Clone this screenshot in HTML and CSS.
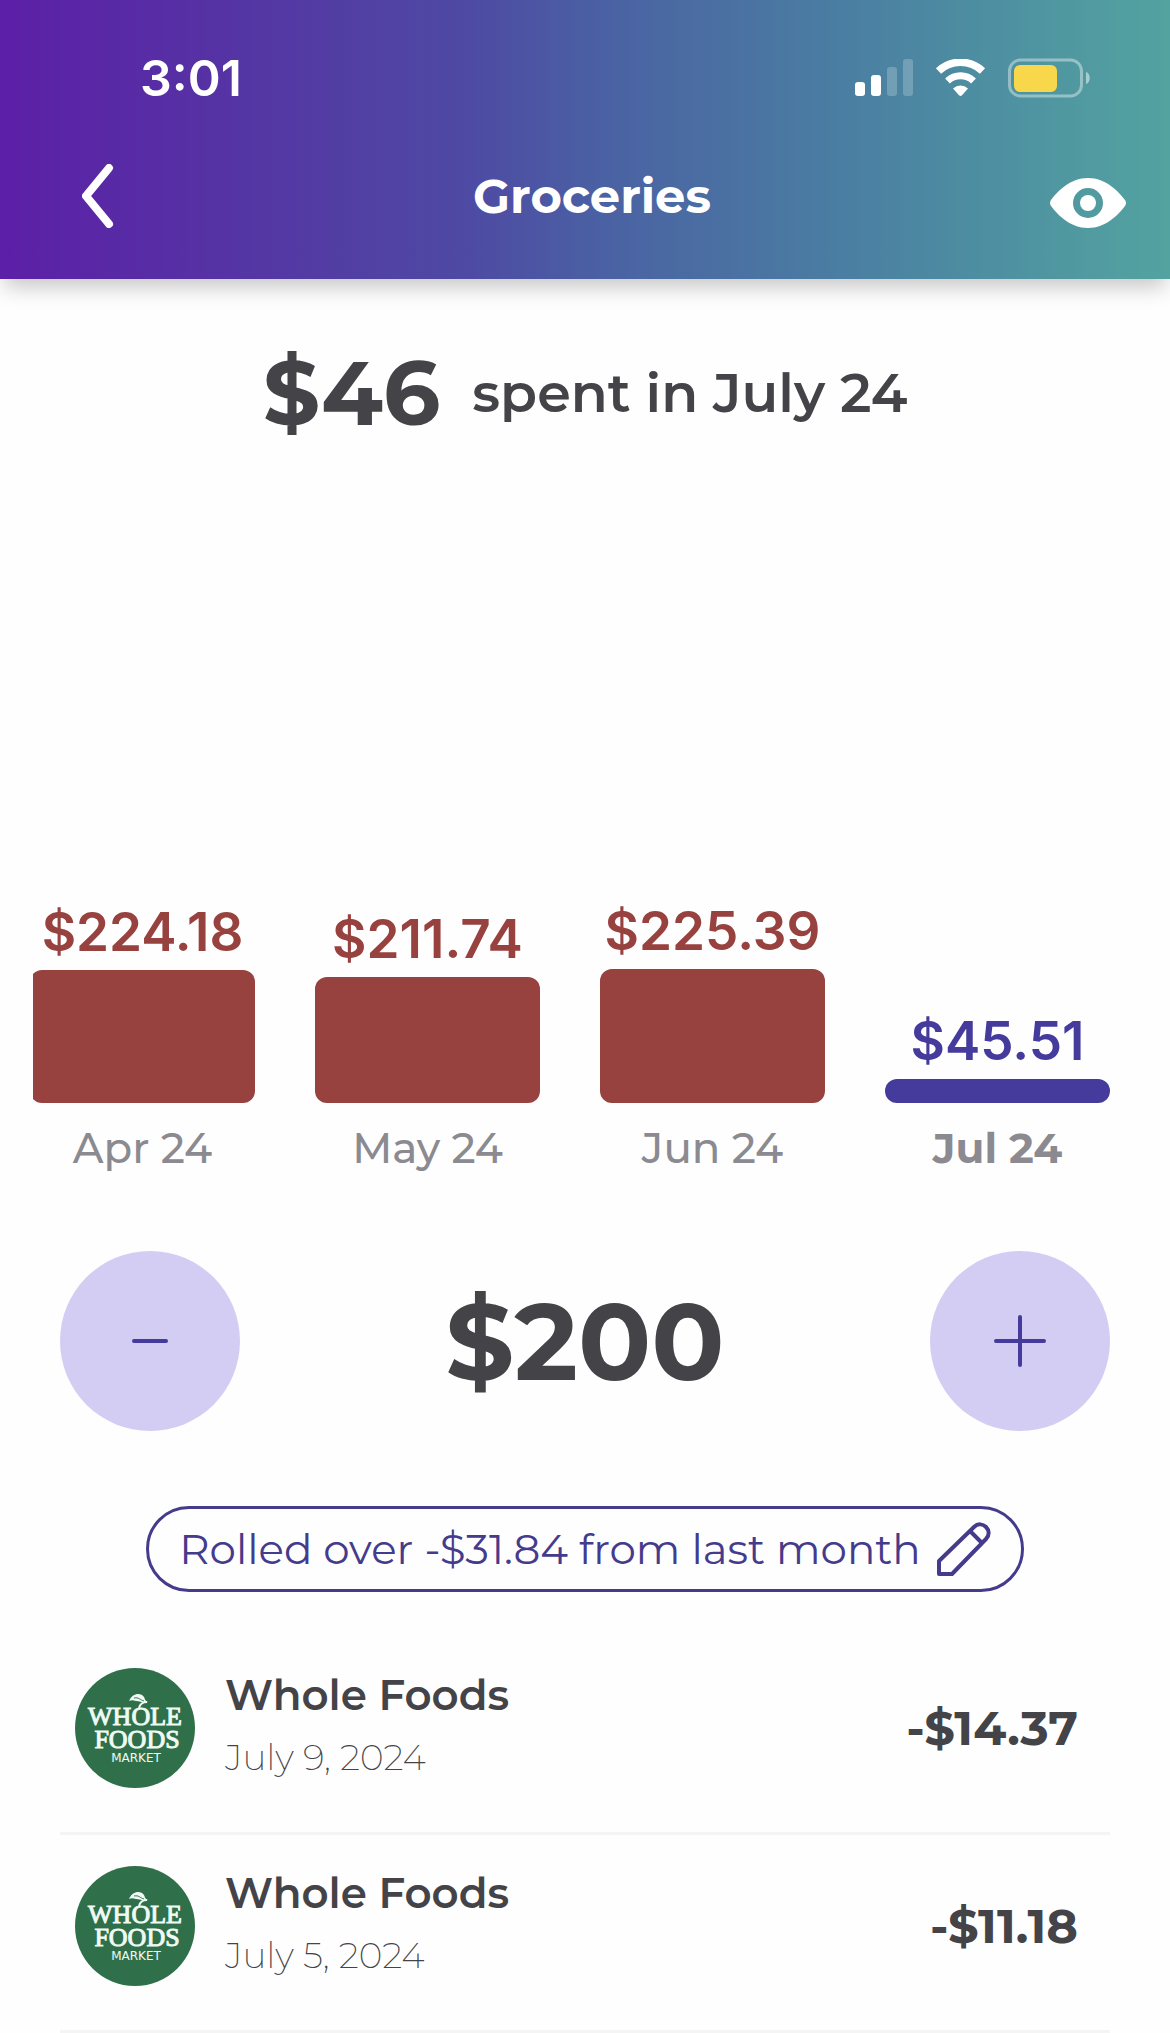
FILE: index.html
```html
<!DOCTYPE html>
<html lang="en">
<head>
<meta charset="utf-8">
<meta name="viewport" content="width=device-width, initial-scale=1">
<title>Groceries</title>
<link rel="stylesheet" href="styles.css">
</head>
<body>
<header class="header">
  <div class="status">
    <span class="clock">3:01</span>
    <div class="indicators">
      <svg width="58" height="38" viewBox="0 0 58 38" fill="#fff" role="img" aria-label="Signal">
        <rect x="0" y="23" width="10" height="14" rx="3"/>
        <rect x="16" y="16" width="10" height="21" rx="3"/>
        <rect x="32" y="8" width="10" height="29" rx="3" opacity=".22"/>
        <rect x="48" y="0" width="10" height="37" rx="3" opacity=".22"/>
      </svg>
      <svg width="51" height="38" viewBox="0 0 51 38" role="img" aria-label="Wi-Fi">
        <path d="M3.500 12a32 32 0 0 1 44 0" fill="none" stroke="#fff" stroke-width="7.500"/>
        <path d="M12.500 22a19 19 0 0 1 26 0" fill="none" stroke="#fff" stroke-width="7"/>
        <path d="M18 29.500a11 11 0 0 1 15 0L27 36.200q-1.500 1.500-3 0z" fill="#fff"/>
      </svg>
      <svg width="83" height="40" viewBox="0 0 83 40" role="img" aria-label="Battery">
        <rect x="1.500" y="2" width="72" height="36" rx="11" fill="none" stroke="#fff" stroke-width="3" opacity=".4"/>
        <rect x="6" y="7" width="43" height="27" rx="6" fill="#f8d84a"/>
        <path d="M78 14c5 1 5 11 0 12z" fill="#fff" opacity=".5"/>
      </svg>
    </div>
  </div>
  <div class="titlebar">
    <button class="icon-button back" type="button" aria-label="Back">
      <svg width="32" height="64" viewBox="0 0 32 64" fill="none" stroke="#fff" stroke-width="8" stroke-linecap="round" stroke-linejoin="round"><path d="M27 4 4 32l23 28"/></svg>
    </button>
    <h1 class="title">Groceries</h1>
    <button class="icon-button view" type="button" aria-label="Toggle visibility">
      <svg width="76" height="64" viewBox="0 0 76 64"><path fill="#fff" fill-rule="evenodd" d="M38 14C56 14 69 28 75 36q2 3 0 6C69 50 56 64 38 64S7 50 1 42q-2-3 0-6C7 28 20 14 38 14zM38 24a15 15 0 1 0 0 30 15 15 0 0 0 0-30z"/><circle cx="38" cy="39" r="8" fill="#fff"/></svg>
    </button>
  </div>
</header>

<main>
  <p class="summary"><strong class="spent">$46</strong> <span class="period">spent in July 24</span></p>

  <section class="chart" aria-label="Spending by month">
    <div class="columns">
      <div class="column over"><span class="value">$224.18</span><div class="bar" style="height:133px"></div><span class="month">Apr 24</span></div>
      <div class="column over"><span class="value">$211.74</span><div class="bar" style="height:126px"></div><span class="month">May 24</span></div>
      <div class="column over"><span class="value">$225.39</span><div class="bar" style="height:134px"></div><span class="month">Jun 24</span></div>
      <div class="column current"><span class="value">$45.51</span><div class="bar" style="height:24px"></div><span class="month">Jul 24</span></div>
    </div>
  </section>

  <section class="stepper" aria-label="Monthly budget">
    <button class="step" type="button" aria-label="Decrease budget">
      <svg width="52" height="52" viewBox="0 0 52 52" stroke="#453b9c" stroke-width="4" stroke-linecap="round"><path d="M10 26h32"/></svg>
    </button>
    <output class="budget">$200</output>
    <button class="step" type="button" aria-label="Increase budget">
      <svg width="52" height="52" viewBox="0 0 52 52" stroke="#453b9c" stroke-width="4" stroke-linecap="round"><path d="M2 26h48M26 2v48"/></svg>
    </button>
  </section>

  <button class="rollover" type="button">
    <span>Rolled over -$31.84 from last month</span>
    <svg width="54" height="54" viewBox="0 0 54 54" fill="none" stroke="#453b8c" stroke-width="4" stroke-linejoin="round"><path d="M2 52V39L37 5c8-8 20 4 12 12L15 52zM33 9l12 12"/></svg>
  </button>

  <ul class="transactions">
    <li class="transaction">
      <svg class="logo" viewBox="0 0 120 120" role="img" aria-label="Whole Foods Market">
        <circle cx="60" cy="60" r="60" fill="#2f704a"/>
        <text class="logo-name" x="60" y="57">WHOLE</text>
        <text class="logo-name" x="62" y="80">FOODS</text>
        <text class="logo-sub" x="61" y="94">MARKET</text>
        <path d="M54 33C57 25 66 24 69 29c1 2 1 4 4 5-4 2-8-1-12-1-3-1-5-1-7 0z" fill="#effaf4"/>
        <path d="M59 30c5-1 6 2 10 3" fill="none" stroke="#2f704a" stroke-width="1"/>
        <path d="M72 34c-4 0-7 2-8 6" fill="none" stroke="#effaf4" stroke-width="2"/>
      </svg>
      <div class="details"><span class="merchant">Whole Foods</span><time class="date" datetime="2024-07-09">July 9, 2024</time></div>
      <span class="amount">-$14.37</span>
    </li>
    <li class="transaction">
      <svg class="logo" viewBox="0 0 120 120" role="img" aria-label="Whole Foods Market">
        <circle cx="60" cy="60" r="60" fill="#2f704a"/>
        <text class="logo-name" x="60" y="57">WHOLE</text>
        <text class="logo-name" x="62" y="80">FOODS</text>
        <text class="logo-sub" x="61" y="94">MARKET</text>
        <path d="M54 33C57 25 66 24 69 29c1 2 1 4 4 5-4 2-8-1-12-1-3-1-5-1-7 0z" fill="#effaf4"/>
        <path d="M59 30c5-1 6 2 10 3" fill="none" stroke="#2f704a" stroke-width="1"/>
        <path d="M72 34c-4 0-7 2-8 6" fill="none" stroke="#effaf4" stroke-width="2"/>
      </svg>
      <div class="details"><span class="merchant">Whole Foods</span><time class="date" datetime="2024-07-05">July 5, 2024</time></div>
      <span class="amount">-$11.18</span>
    </li>
  </ul>
</main>
</body>
</html>
```
FILE: styles.css
```css
* { box-sizing: border-box; }

body {
  margin: 0;
  background: #fefefe;
  color: #444348;
  font-family: Montserrat, Inter, "Liberation Sans", sans-serif;
}

button {
  margin: 0;
  padding: 0;
  border: 0;
  background: none;
  color: inherit;
  font: inherit;
  cursor: pointer;
}

svg { display: block; flex: none; }

/* Header */
.header {
  padding: 50px 0 52px;
  background: linear-gradient(90deg, #5c1fa7 0%, #5534a4 20%, #4e4aa3 40%, #4a62a3 52%, #4a7ea2 72%, #4f94a1 88%, #53a3a0 100%);
  box-shadow: 0 12px 20px -4px rgba(0, 0, 0, 0.22);
  color: #fff;
}

.status {
  display: flex;
  align-items: center;
  justify-content: space-between;
  height: 56px;
  padding: 0 79px 0 140px;
}

.clock { font-family: Inter, sans-serif; font-size: 50px; font-weight: 600; }
.indicators { display: flex; align-items: center; gap: 22px; }

.titlebar {
  display: grid;
  grid-template-columns: 1fr auto 1fr;
  align-items: center;
  height: 64px;
  margin-top: 57px;
  padding: 0 30px 0 44px;
}

.icon-button { justify-self: start; padding: 0 38px; }
.view { justify-self: end; padding: 0 14px; }
.title { margin: 0; font-size: 48px; line-height: 66px; font-weight: 700; }

/* Month total */
.summary {
  display: flex;
  align-items: center;
  justify-content: center;
  gap: 32px;
  margin: 60px 0 0;
  line-height: 108px;
}

.spent { font-size: 90px; font-weight: 700; }
.period { font-size: 54px; font-weight: 600; }

/* Bar chart */
.chart { margin: 0 60px 0 33px; overflow: hidden; }

.columns {
  display: grid;
  grid-template-columns: repeat(4, 1fr);
  gap: 60px;
  min-height: 729px;
  margin-left: -3px;
}

.column { display: flex; flex-direction: column; justify-content: flex-end; align-items: center; }
.value { margin-bottom: 10px; font-family: Inter, sans-serif; font-size: 53px; line-height: 56px; font-weight: 600; }
.bar { width: 100%; border-radius: 12px; background: currentColor; }
.month { margin-top: 17px; color: #8b8a91; font-size: 42px; line-height: 56px; font-weight: 500; }
.over { color: #984240; }
.current { color: #453b9c; }
.current .month { font-weight: 700; }

/* Budget stepper */
.stepper {
  display: flex;
  align-items: center;
  justify-content: space-between;
  margin: 75px 60px;
}

.step {
  display: grid;
  place-items: center;
  width: 180px;
  height: 180px;
  border-radius: 50%;
  background: #d3cdf3;
}

.budget { font-size: 108px; line-height: 130px; font-weight: 700; }

/* Rollover pill */
.rollover {
  display: flex;
  align-items: center;
  gap: 16px;
  height: 86px;
  margin: 0 auto;
  padding: 0 30px;
  border: 3px solid #453b8c;
  border-radius: 43px;
  color: #453b8c;
  font-size: 42px;
  font-weight: 400;
}

/* Transactions */
.transactions { margin: 45px 60px 0; padding: 0; list-style: none; }

.transaction {
  display: flex;
  align-items: center;
  gap: 30px;
  padding: 31px 32px 44px 15px;
  border-bottom: 3px solid #f4f4f4;
}

.logo { width: 120px; height: 120px; }
.logo text { fill: #effaf4; text-anchor: middle; }
.logo-name { font-family: "Liberation Serif", serif; font-size: 26px; stroke: #effaf4; stroke-width: 1px; }
.logo-sub { font-family: "DejaVu Sans", sans-serif; font-size: 12px; }

.details { display: flex; flex: 1; flex-direction: column; align-self: flex-start; gap: 8px; line-height: 54px; }
.merchant { font-size: 42px; font-weight: 600; }
.date { font-size: 36px; font-weight: 200; }
.amount { font-size: 48px; font-weight: 700; }
```
